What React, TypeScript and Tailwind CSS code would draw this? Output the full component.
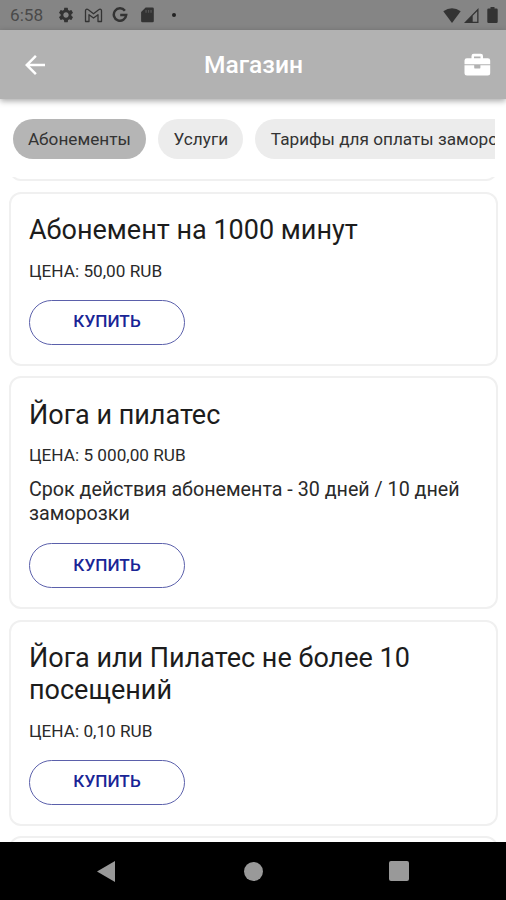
import { useState } from "react";
import { MdSettings, MdArrowBack } from "react-icons/md";

interface Plan { id: number; title: string; price: string; description?: string; }

const tabs = ["Абонементы", "Услуги", "Тарифы для оплаты заморозки"];

const plans: Plan[] = [
  { id: 1, title: "Абонемент на 1000 минут", price: "50,00 RUB" },
  { id: 2, title: "Йога и пилатес", price: "5 000,00 RUB", description: "Срок действия абонемента - 30 дней / 10 дней заморозки" },
  { id: 3, title: "Йога или Пилатес не более 10 посещений", price: "0,10 RUB" },
];

function StatusBar() {
  return (
    <div className="flex h-[30px] shrink-0 items-center justify-between bg-[#858585] pl-[10px] pr-[8px] text-[#333]">
      <div className="flex items-center">
        <span className="w-[47px] pt-px text-[17.2px] leading-[29px] text-[#4a4a4a]">6:58</span>
        <MdSettings size={18} />
        <svg className="ml-[9px]" width="19" height="15" viewBox="0 0 19 15" fill="none" stroke="currentColor" strokeWidth="1.3" strokeLinejoin="round">
          <path d="M1.5 13.5V2.6C1.5 1.2 3 .8 4 1.6L9.5 5.8 15 1.6C16 .8 17.5 1.2 17.5 2.6V13.5H14V6.7L9.5 10 5 6.7V13.5Z" />
        </svg>
        <svg className="ml-[9px]" width="16" height="16" viewBox="0 0 16 16" fill="none" stroke="currentColor" strokeWidth="2.5">
          <path d="M12.9 3.7A6.2 6.2 0 1 0 14.2 8H8.2" />
        </svg>
        <svg className="ml-[13px]" width="13" height="16" viewBox="0 0 13 16" fill="currentColor">
          <path d="M4.6.5H11.5A1.3 1.3 0 0 1 12.8 1.8V14A1.3 1.3 0 0 1 11.5 15.3H1.4A1.3 1.3 0 0 1 .1 14V5Z" />
          <path d="M4.4 3V5.8H5.7V3ZM6.9 3V5.8H8.2V3ZM9.4 3V5.8H10.7V3Z" fill="#555" />
        </svg>
        <span className="ml-[18px] h-1 w-1 rounded-full bg-[#222]" />
      </div>
      <div className="flex items-center">
        <svg width="18" height="15" viewBox="0 0 18 15" fill="currentColor"><path d="M9 15 .3 3.3Q9-2.7 17.7 3.3Z" /></svg>
        <svg className="ml-[3px]" width="15" height="15" viewBox="0 0 15 15" fill="currentColor">
          <path fillRule="evenodd" d="M14.5 0V15H0ZM13.2 3.3 8.7 7.8V13.7H13.2Z" />
        </svg>
        <svg className="ml-[8px]" width="11" height="16" viewBox="0 0 11 16" fill="currentColor"><path d="M3.5 0H7.5V1.5H9.5Q10.7 1.5 10.7 2.7V14.8Q10.7 16 9.5 16H1.5Q.3 16 .3 14.8V2.7Q.3 1.5 1.5 1.5H3.5Z" /></svg>
      </div>
    </div>
  );
}

function PlanCard({ plan }: { plan: Plan }) {
  return (
    <div className="shrink-0 rounded-[12px] border-2 border-[#f0f0f0] bg-white px-[18px] pb-[19px] pt-[20.5px]">
      <h2 className="text-[27px] leading-8 text-[#1c1c1c]">{plan.title}</h2>
      <p className="mt-[13.5px] text-[17.2px] leading-[22px] text-[#2a2a2a]">ЦЕНА: {plan.price}</p>
      {plan.description && <p className="mt-[12px] text-[19.7px] leading-[23.5px] text-[#2a2a2a]">{plan.description}</p>}
      <button className="mt-[18px] flex h-[45px] w-[156px] items-center justify-center rounded-full border border-[#5b60ab] text-[17.2px] font-medium text-[#1a2596]">
        КУПИТЬ
      </button>
    </div>
  );
}

export default function App() {
  const [active, setActive] = useState(tabs[0]);

  return (
    <div className="flex h-[900px] w-[506px] flex-col overflow-hidden bg-white font-[Roboto,sans-serif]">
      <StatusBar />

      <header className="z-10 flex h-[69px] shrink-0 items-center bg-[#b2b2b2] pl-[20px] pr-[15px] text-white shadow-[0_2px_6px_rgba(0,0,0,0.35)]">
        <MdArrowBack size={30} />
        <h1 className="flex-1 pr-[1px] pt-[2px] text-center text-[24.6px] font-medium">Магазин</h1>
        <svg className="ml-[6px]" width="27" height="23" viewBox="0 0 27 23" fill="currentColor">
          <path fillRule="evenodd" d="M7.5 5.2V2.9Q7.5.7 9.7.7H16.8Q19 .7 19 2.9V5.2H23.8Q26.2 5.2 26.2 7.6V11.2H.5V7.6Q.5 5.2 2.9 5.2ZM10 5.2H16.5V3.4H10Z" />
          <path d="M.5 12.3H10.2V14.4Q10.2 15.6 11.4 15.6H15.2Q16.4 15.6 16.4 14.4V12.3H26.2V20Q26.2 22.5 23.7 22.5H3Q.5 22.5.5 20Z" />
        </svg>
      </header>

      <div className="ml-[12.5px] mr-[11px] mt-[20px] flex h-[40px] shrink-0 gap-[12px] overflow-hidden">
        {tabs.map((tab) => (
          <button key={tab} onClick={() => setActive(tab)}
            className={`h-[39.5px] shrink-0 whitespace-nowrap rounded-full px-[15.4px] pt-[2px] text-[17.2px] text-[#333] ${active === tab ? "bg-[#b5b5b5]" : "bg-[#ececec]"}`}>
            {tab}
          </button>
        ))}
      </div>

      {/* list is scrolled: tail of the previous card stays visible on top */}
      <div className="mt-[18px] flex min-h-0 flex-1 flex-col gap-[10.5px] overflow-hidden pl-[9px] pr-[8px]">
        <div className="flex h-[4px] shrink-0 items-end overflow-hidden">
          <div className="h-[40px] w-full shrink-0 rounded-[12px] border-2 border-[#f0f0f0]" />
        </div>
        {plans.map((plan) => <PlanCard key={plan.id} plan={plan} />)}
        <div className="h-[40px] shrink-0 rounded-[12px] border-2 border-[#f0f0f0]" />
      </div>

      <nav className="flex h-[58px] shrink-0 items-center bg-black text-[#999]">
        <svg className="ml-[97px]" width="18" height="21" viewBox="0 0 18 21" fill="currentColor"><path d="M18 0V21L0 10.5Z" /></svg>
        <span className="ml-[129px] h-[19px] w-[19px] rounded-full bg-[#999]" />
        <span className="ml-[126px] h-[20px] w-[20px] rounded-[2px] bg-[#999]" />
      </nav>
    </div>
  );
}
